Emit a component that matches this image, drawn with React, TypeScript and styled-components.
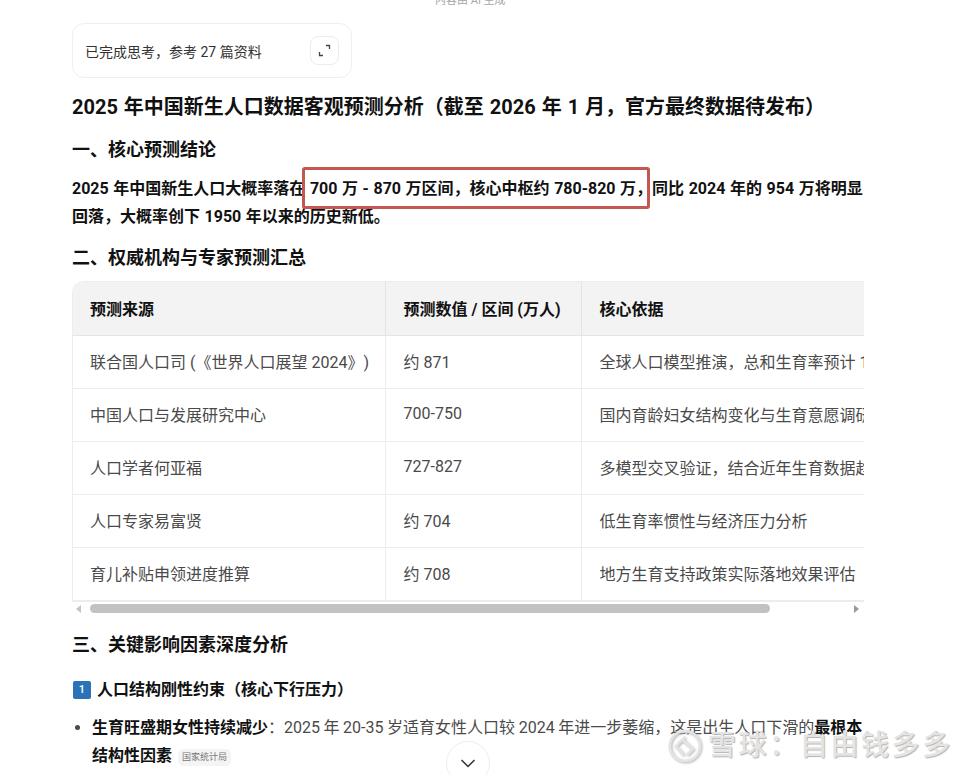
import React from "react";
import styled, { createGlobalStyle } from "styled-components";

const GlobalStyle = createGlobalStyle`
  html, body {
    margin: 0;
    padding: 0;
    background: #fff;
    overflow: hidden;
  }
  body {
    font-family: Roboto, "Noto Sans CJK SC", sans-serif;
    color: #111;
    text-spacing-trim: space-all;
  }
`;

const Page = styled.div`
  position: relative;
  width: 977px;
  height: 775px;
  overflow: hidden;
  box-sizing: border-box;
  padding: 23px 113px 0 72px;
`;

const CutNotice = styled.div`
  position: absolute;
  top: -7px;
  left: 435px;
  font-size: 11px;
  line-height: 15px;
  color: #a8a8a8;
`;

const ThinkCard = styled.div`
  width: 280px;
  height: 55px;
  box-sizing: border-box;
  display: flex;
  align-items: center;
  justify-content: space-between;
  padding: 0 12px;
  border: 1px solid #efefef;
  border-radius: 12px;
  font-size: 14px;
  color: #333;
`;

const ExpandButton = styled.div`
  width: 27px;
  height: 27px;
  display: flex;
  align-items: center;
  justify-content: center;
  border: 1px solid #ececec;
  border-radius: 8px;
`;

const Title = styled.h1`
  margin: 15px 0 0;
  font-size: 20px;
  line-height: 28px;
  font-weight: 700;
  word-spacing: 1px;
  color: #111;
`;

const Heading = styled.h2<{ $top: number }>`
  margin: ${(p) => p.$top}px 0 0;
  font-size: 18px;
  line-height: 26px;
  font-weight: 700;
  color: #111;
`;

const Lead = styled.p`
  margin: 12px 0 0;
  font-size: 16px;
  line-height: 28px;
  font-weight: 700;
  word-spacing: 0.6px;
  color: #111;
`;

const Marked = styled.span`
  position: relative;

  &::after {
    content: "";
    position: absolute;
    left: -8px;
    right: 2px;
    top: -12px;
    bottom: -11px;
    border: 3px solid #c4574f;
    border-radius: 3px;
  }
`;

const TableWrap = styled.div`
  margin-top: 10px;
  width: 792px;
  overflow: hidden;
  border: 1px solid #ededed;
  border-right: 0;
  border-radius: 12px 0 0 0;
  box-sizing: border-box;
`;

const Table = styled.table`
  width: 930px;
  table-layout: fixed;
  border-collapse: collapse;
  font-size: 16px;
`;

const HeadCell = styled.th`
  height: 53px;
  padding: 0 17px 0 18px;
  box-sizing: border-box;
  background: #f3f3f3;
  text-align: left;
  font-weight: 700;
  color: #111;
  white-space: nowrap;
  border-right: 1px solid #e4e4e4;
  border-bottom: 1px solid #e4e4e4;

  &:first-child {
    padding-left: 17px;
  }
`;

const Cell = styled.td`
  height: 53px;
  padding: 0 17px 2px 18px;
  box-sizing: border-box;
  color: #4a4a4a;
  white-space: nowrap;
  overflow: hidden;
  border-right: 1px solid #ececec;
  border-bottom: 1px solid #ececec;

  &:first-child {
    padding-left: 17px;
  }
`;

const ScrollBar = styled.div`
  display: flex;
  align-items: center;
  width: 792px;
  height: 14px;
  margin-top: 0;
`;

const Arrow = styled.span<{ $right?: boolean }>`
  width: 0;
  height: 0;
  flex: none;
  border-top: 4px solid transparent;
  border-bottom: 4px solid transparent;
  ${(p) =>
    p.$right
      ? "border-left: 5px solid #9a9a9a; margin-left: 84px;"
      : "border-right: 5px solid #c4c4c4; margin-left: 4px; margin-right: 9px;"}
`;

const Thumb = styled.div`
  width: 680px;
  height: 9px;
  border-radius: 5px;
  background: #c2c2c2;
`;

const SubHeading = styled.h3`
  display: flex;
  align-items: center;
  gap: 6px;
  margin: 19px 0 0;
  font-size: 16px;
  line-height: 26px;
  font-weight: 700;
  color: #111;
`;

const KeyCap = styled.span`
  width: 18px;
  height: 18px;
  margin-left: 1px;
  display: flex;
  align-items: center;
  justify-content: center;
  border-radius: 2px;
  background: #2a73b8;
  color: #fff;
  font-size: 11px;
  font-weight: 500;
`;

const List = styled.ul`
  margin: 11px -4px 0 0;
  padding: 0 0 0 20px;
  font-size: 16px;
  line-height: 28px;
  word-spacing: -0.4px;
  color: #4a4a4a;
`;

const Strong = styled.strong`
  font-weight: 700;
  color: #111;
`;

const SourceTag = styled.span`
  display: inline-block;
  margin-left: 6px;
  padding: 0 4px;
  border-radius: 5px;
  background: #f4f4f4;
  font-size: 9px;
  line-height: 17px;
  color: #777;
  vertical-align: 1px;
`;

const ScrollDown = styled.div`
  position: absolute;
  left: 446px;
  top: 741px;
  width: 44px;
  height: 44px;
  display: flex;
  align-items: center;
  justify-content: center;
  background: #fff;
  border: 1px solid #eee;
  border-radius: 50%;
  box-sizing: border-box;
`;

const Watermark = styled.div`
  position: absolute;
  left: 667px;
  top: 728px;
  display: flex;
  align-items: center;
  gap: 5px;
  font-size: 28px;
  line-height: 36px;
  font-weight: 500;
  letter-spacing: 2.6px;
  color: #e4e4e4;
  text-shadow: 1px 1px 1px #b4b4b4;
  white-space: nowrap;
`;

const WatermarkLogo = styled.svg`
  filter: drop-shadow(1px 1px 1px #b4b4b4);
`;

const rows = [
  ["联合国人口司 (《世界人口展望 2024》)", "约 871", "全球人口模型推演，总和生育率预计 1.0 左右"],
  ["中国人口与发展研究中心", "700-750", "国内育龄妇女结构变化与生育意愿调研数据"],
  ["人口学者何亚福", "727-827", "多模型交叉验证，结合近年生育数据趋势判断"],
  ["人口专家易富贤", "约 704", "低生育率惯性与经济压力分析"],
  ["育儿补贴申领进度推算", "约 708", "地方生育支持政策实际落地效果评估"],
];

const App = () => {
  return (
    <Page>
      <GlobalStyle />
      <CutNotice>内容由 AI 生成</CutNotice>

      <ThinkCard>
        <span>已完成思考，参考 27 篇资料</span>
        <ExpandButton>
          <svg width="13" height="13" viewBox="0 0 13 13" fill="none" stroke="#444" strokeWidth="1.3">
            <path d="M8 1.5h3.5V5" />
            <path d="M1.5 8v3.5H5" />
          </svg>
        </ExpandButton>
      </ThinkCard>

      <Title>2025 年中国新生人口数据客观预测分析（截至 2026 年 1 月，官方最终数据待发布）</Title>

      <Heading $top={16}>一、核心预测结论</Heading>
      <Lead>
        2025 年中国新生人口大概率落在 <Marked>700 万 - 870 万区间，核心中枢约 780-820 万，</Marked>同比 2024 年的 954 万将明显回落，大概率创下 1950 年以来的历史新低。
      </Lead>

      <Heading $top={14}>二、权威机构与专家预测汇总</Heading>
      <TableWrap>
        <Table>
          <colgroup>
            <col style={{ width: 312 }} />
            <col style={{ width: 196 }} />
            <col style={{ width: 422 }} />
          </colgroup>
          <thead>
            <tr>
              <HeadCell>预测来源</HeadCell>
              <HeadCell>预测数值 / 区间 (万人)</HeadCell>
              <HeadCell>核心依据</HeadCell>
            </tr>
          </thead>
          <tbody>
            {rows.map((row) => (
              <tr key={row[0]}>
                {row.map((text) => (
                  <Cell key={text}>{text}</Cell>
                ))}
              </tr>
            ))}
          </tbody>
        </Table>
      </TableWrap>
      <ScrollBar>
        <Arrow />
        <Thumb />
        <Arrow $right />
      </ScrollBar>

      <Heading $top={16}>三、关键影响因素深度分析</Heading>
      <SubHeading>
        <KeyCap>1</KeyCap>
        人口结构刚性约束（核心下行压力）
      </SubHeading>
      <List>
        <li>
          <Strong>生育旺盛期女性持续减少</Strong>：2025 年 20-35 岁适育女性人口较 2024 年进一步萎缩，这是出生人口下滑的<Strong>最根本结构性因素</Strong>
          <SourceTag>国家统计局</SourceTag>
        </li>
      </List>

      <ScrollDown>
        <svg width="18" height="18" viewBox="0 0 18 18" fill="none" stroke="#333" strokeWidth="1.5">
          <path d="M2.5 6 9 12.5 15.5 6" />
        </svg>
      </ScrollDown>

      <Watermark>
        <WatermarkLogo width="36" height="36" viewBox="0 0 36 36" fill="none" stroke="#e4e4e4" strokeWidth="2.6">
          <circle cx="18" cy="18" r="15" />
          <path d="M18 9 9 18l8 9" />
          <path d="M16 12l10 9-6 6" />
        </WatermarkLogo>
        <span>雪球：自由钱多多</span>
      </Watermark>
    </Page>
  );
};

export default App;
